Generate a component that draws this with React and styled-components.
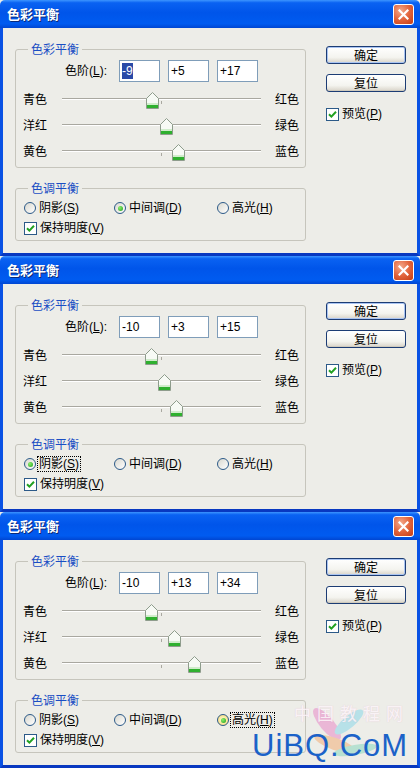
import React from 'react'
import styled, { createGlobalStyle } from 'styled-components'

const GlobalStyle = createGlobalStyle`
  html, body {
    margin: 0;
    padding: 0;
    background: #EDEDE8;
  }
  body {
    font-family: "Liberation Sans", "Noto Sans CJK SC", sans-serif;
    font-size: 12px;
    color: #000;
  }
`

const Page = styled.div`
  width: 420px;
  display: flex;
  flex-direction: column;
  position: relative;
  overflow: hidden;
`

const Window = styled.div`
  height: 256px;
  display: flex;
  flex-direction: column;
`

const TitleBar = styled.div`
  height: 28px;
  flex: none;
  display: flex;
  align-items: center;
  justify-content: space-between;
  padding: 0 6px 0 7px;
  box-sizing: border-box;
  border-radius: 5px 5px 0 0;
  background: linear-gradient(
    to bottom,
    #3D95FF 0%,
    #0A62F2 10%,
    #0055EA 45%,
    #005BF0 85%,
    #0046D2 100%
  );
`

const Title = styled.span`
  color: #fff;
  font-family: "Noto Sans CJK SC", sans-serif;
  font-weight: 700;
  font-size: 13px;
  line-height: 16px;
  text-shadow: 1px 1px 0 #0A2A7A;
`

const CloseButton = styled.div`
  width: 21px;
  height: 21px;
  box-sizing: border-box;
  border: 1px solid #fff;
  border-radius: 3px;
  background: radial-gradient(circle at 35% 30%, #F4A88A 0%, #E2643C 50%, #C43C14 100%);
  display: flex;
  align-items: center;
  justify-content: center;
`

const Body = styled.div`
  flex: 1;
  display: flex;
  align-items: flex-start;
  background: #EDEDE8;
  border: 3px solid #0A52E4;
  border-top: none;
  border-bottom-color: #0838C0;
  padding: 14px 0 0 12px;
`

const LeftColumn = styled.div`
  width: 291px;
  display: flex;
  flex-direction: column;
  gap: 13px;
`

const Group = styled.fieldset`
  margin: 0;
  padding: 0 6px ${p => p.$bottom}px 7px;
  border: 1px solid #C6C5BC;
  border-radius: 3px;
  min-width: 0;
`

const Legend = styled.legend`
  padding: 0 3px;
  margin-left: 5px;
  color: #1A4EC4;
  font-family: "Noto Sans CJK SC", sans-serif;
  font-size: 12px;
  line-height: 14px;
`

const LevelRow = styled.div`
  display: flex;
  align-items: center;
  height: 22px;
  margin-top: 4px;
  gap: 8px;
`

const LevelLabel = styled.span`
  width: 88px;
  padding-right: 4px;
  box-sizing: border-box;
  text-align: right;
  line-height: 14px;
`

const LevelInput = styled.div`
  width: 41px;
  height: 22px;
  box-sizing: border-box;
  border: 1px solid #7F9DB9;
  background: #fff;
  padding-left: 2px;
  line-height: 20px;
  font-size: 12px;
`

const Selected = styled.span`
  background: #2A4AA8;
  color: #fff;
  padding: 1px 0;
`

const SliderList = styled.div`
  display: flex;
  flex-direction: column;
  margin-top: 4px;
`

const SliderRow = styled.div`
  display: flex;
  align-items: center;
  height: 26px;
`

const ColorLabel = styled.span`
  width: 39px;
  flex: none;
  font-family: "Noto Sans CJK SC", sans-serif;
  line-height: 14px;
`

const Track = styled.div`
  position: relative;
  width: 199px;
  height: 0;
  border-top: 1px solid #A9A8A0;
  border-bottom: 1px solid #FFFFFF;
  margin-top: -1px;
`

const CenterTick = styled.span`
  position: absolute;
  left: 99px;
  top: 2px;
  width: 1px;
  height: 3px;
  background: #A9A8A0;
`

const Thumb = styled.svg`
  position: absolute;
  top: -7px;
`

const RightLabel = styled.span`
  margin-left: 14px;
  font-family: "Noto Sans CJK SC", sans-serif;
  line-height: 14px;
`

const ToneRow = styled.div`
  display: grid;
  grid-template-columns: 90px 103px auto;
  align-items: center;
  height: 20px;
  margin-top: 3px;
`

const Option = styled.div`
  display: flex;
  align-items: center;
  gap: 2px;
  padding-left: 1px;
`

const RadioCircle = styled.span`
  width: 12px;
  height: 12px;
  flex: none;
  box-sizing: border-box;
  border-radius: 50%;
  border: 1px solid #2C5A88;
  background: ${p => (p.$hover ? 'radial-gradient(circle, #FFF6C8 20%, #F4D46A 100%)' : 'linear-gradient(135deg, #D9D8CF, #FFFFFF)')};
  display: flex;
  align-items: center;
  justify-content: center;
  &::after {
    content: '';
    width: 5px;
    height: 5px;
    border-radius: 50%;
    background: ${p => (p.$checked ? 'radial-gradient(circle at 35% 35%, #8CF06A, #1E9E1E)' : 'transparent')};
  }
`

const OptionText = styled.span`
  line-height: 14px;
  padding: 0 1px;
  outline: ${p => (p.$focus ? '1px dotted #000' : 'none')};
`

const CheckRow = styled.div`
  display: flex;
  align-items: center;
  gap: 2px;
  height: 20px;
  padding-left: 1px;
`

const CheckBox = styled.span`
  width: 13px;
  height: 13px;
  flex: none;
  box-sizing: border-box;
  border: 1px solid #2C5A88;
  background: #fff;
  display: flex;
  align-items: center;
  justify-content: center;
`

const RightColumn = styled.div`
  margin-left: 20px;
  padding-top: 4px;
  display: flex;
  flex-direction: column;
  gap: 10px;
`

const Button = styled.div`
  width: 80px;
  height: 18px;
  box-sizing: border-box;
  border: 1px solid #1C3C74;
  border-radius: 3px;
  background: linear-gradient(#FFFFFF, #F4F4EF 65%, #D8D3C8);
  box-shadow: ${p => (p.$default ? 'inset 0 0 0 1px #A9C4F2' : 'inset 0 -1px 0 #CFCABD')};
  display: flex;
  align-items: center;
  justify-content: center;
  font-family: "Noto Sans CJK SC", sans-serif;
  line-height: 14px;
`

const PreviewRow = styled(CheckRow)`
  margin-top: 5px;
  height: 14px;
  padding-left: 0;
`

const Watermark = styled.div`
  position: absolute;
  left: 250px;
  top: 698px;
  width: 170px;
  height: 62px;
  pointer-events: none;
`

const WatermarkGhost = styled.div`
  position: absolute;
  left: 44px;
  top: 5px;
  font-family: "Noto Sans CJK SC", sans-serif;
  font-size: 17px;
  line-height: 20px;
  letter-spacing: 6px;
  color: rgba(255, 255, 255, 0.8);
  text-shadow: 0 0 1px rgba(220, 150, 190, 0.5);
`

const WatermarkText = styled.div`
  position: absolute;
  left: 2px;
  top: 35px;
  font-family: "Liberation Sans", sans-serif;
  font-size: 31px;
  line-height: 26px;
  letter-spacing: 1px;
  color: #1B62C8;
`

const Swoosh = styled.svg`
  position: absolute;
  left: 55px;
  top: 4px;
  opacity: 0.55;
`

const colorRows = [
  ['青色', '红色'],
  ['洋红', '绿色'],
  ['黄色', '蓝色'],
]

const tones = [
  { key: 'shadow', label: '阴影', hot: 'S' },
  { key: 'mid', label: '中间调', hot: 'D' },
  { key: 'high', label: '高光', hot: 'H' },
]

const dialogs = [
  { values: [-9, 5, 17], selectFirst: true, tone: 'mid', focus: null, hover: null },
  { values: [-10, 3, 15], selectFirst: false, tone: 'shadow', focus: 'shadow', hover: null },
  { values: [-10, 13, 34], selectFirst: false, tone: 'high', focus: 'high', hover: 'high' },
]

const fmt = v => (v > 0 ? `+${v}` : `${v}`)

function CheckMark() {
  return (
    <svg width="9" height="9" viewBox="0 0 9 9">
      <path d="M1 4.2 L3.4 6.6 L8 1.8" fill="none" stroke="#21A121" strokeWidth="2" />
    </svg>
  )
}

function SliderThumb({ value }) {
  const x = 99.5 + value * 0.985
  return (
    <Thumb width="13" height="17" viewBox="0 0 13 17" style={{ left: Math.round(x - 6.5) }}>
      <path d="M0.5 6.5 L6.5 0.5 L12.5 6.5 V16.5 H0.5 Z" fill="#F7FAF5" stroke="#8E9C8C" />
      <path d="M1 12 H12" stroke="#A8E0A0" />
      <rect x="1" y="13" width="11" height="3" fill="#2FB02F" />
    </Thumb>
  )
}

function Hot({ label, hot }) {
  return (
    <>
      {label}(<u>{hot}</u>)
    </>
  )
}

function ColorBalanceDialog({ values, selectFirst, tone, focus, hover }) {
  return (
    <Window>
      <TitleBar>
        <Title>色彩平衡</Title>
        <CloseButton>
          <svg width="11" height="11" viewBox="0 0 11 11">
            <path d="M1.5 1.5 L9.5 9.5 M9.5 1.5 L1.5 9.5" stroke="#fff" strokeWidth="2.2" strokeLinecap="square" />
          </svg>
        </CloseButton>
      </TitleBar>
      <Body>
        <LeftColumn>
          <Group $bottom={3}>
            <Legend>色彩平衡</Legend>
            <LevelRow>
              <LevelLabel>
                <Hot label="色阶" hot="L" />:
              </LevelLabel>
              {values.map((v, i) => (
                <LevelInput key={i}>{i === 0 && selectFirst ? <Selected>{fmt(v)}</Selected> : fmt(v)}</LevelInput>
              ))}
            </LevelRow>
            <SliderList>
              {colorRows.map(([left, right], i) => (
                <SliderRow key={left}>
                  <ColorLabel>{left}</ColorLabel>
                  <Track>
                    <CenterTick />
                    <SliderThumb value={values[i]} />
                  </Track>
                  <RightLabel>{right}</RightLabel>
                </SliderRow>
              ))}
            </SliderList>
          </Group>
          <Group $bottom={2}>
            <Legend>色调平衡</Legend>
            <ToneRow>
              {tones.map(t => (
                <Option key={t.key}>
                  <RadioCircle $checked={tone === t.key} $hover={hover === t.key} />
                  <OptionText $focus={focus === t.key}>
                    <Hot label={t.label} hot={t.hot} />
                  </OptionText>
                </Option>
              ))}
            </ToneRow>
            <CheckRow>
              <CheckBox>
                <CheckMark />
              </CheckBox>
              <OptionText>
                <Hot label="保持明度" hot="V" />
              </OptionText>
            </CheckRow>
          </Group>
        </LeftColumn>
        <RightColumn>
          <Button $default>确定</Button>
          <Button>复位</Button>
          <PreviewRow>
            <CheckBox>
              <CheckMark />
            </CheckBox>
            <OptionText>
              <Hot label="预览" hot="P" />
            </OptionText>
          </PreviewRow>
        </RightColumn>
      </Body>
    </Window>
  )
}

export default function App() {
  return (
    <>
      <GlobalStyle />
      <Page>
        {dialogs.map((d, i) => (
          <ColorBalanceDialog key={i} {...d} />
        ))}
        <Watermark>
          <Swoosh width="80" height="58" viewBox="0 0 80 58">
            <ellipse cx="22" cy="22" rx="20" ry="7" transform="rotate(50 22 22)" fill="#E88CC8" />
            <ellipse cx="44" cy="20" rx="18" ry="6" transform="rotate(-40 44 20)" fill="#8CD8E8" />
            <ellipse cx="30" cy="42" rx="22" ry="6" transform="rotate(20 30 42)" fill="#F4B07A" />
            <ellipse cx="50" cy="48" rx="22" ry="5" transform="rotate(-10 50 48)" fill="#8CD8C0" />
          </Swoosh>
          <WatermarkGhost>中国教程网</WatermarkGhost>
          <WatermarkText>UiBQ.CoM</WatermarkText>
        </Watermark>
      </Page>
    </>
  )
}
